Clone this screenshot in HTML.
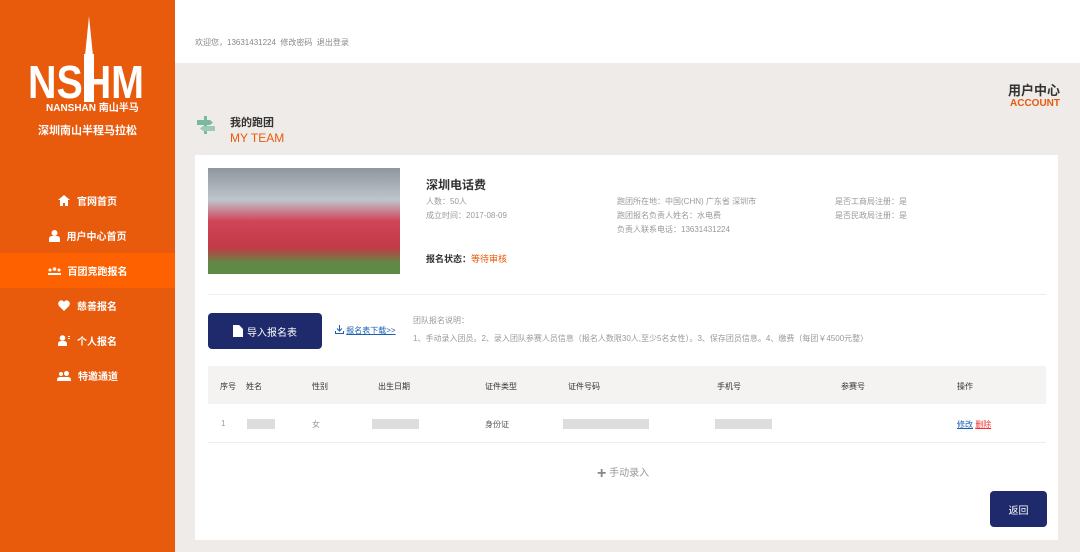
<!DOCTYPE html>
<html><head><meta charset="utf-8"><style>
*{margin:0;padding:0;box-sizing:border-box}
body{width:1080px;height:552px;overflow:hidden;font-family:"Liberation Sans","Noto Sans CJK SC",sans-serif;background:#efebe8;position:relative;color:#333}
.a{position:absolute;white-space:nowrap}
#side{position:absolute;left:0;top:0;width:175px;height:552px;background:#e85a0c}
.nav{position:absolute;left:0;width:175px;height:35px;color:#fff;font-size:10px;font-weight:bold;display:flex;align-items:center;justify-content:center;gap:7px}
.g{color:#999;font-size:8px}
.blur{position:absolute;height:10px;background:#ddd}
</style></head><body>
<div id="side">
  <svg class="a" style="left:28px;top:16px" width="120" height="96" viewBox="0 0 120 96">
    <polygon points="61,0 57,40 65,40" fill="#fff"/>
    <rect x="56" y="38" width="10" height="48" fill="#fff"/>
    <text x="0" y="82" font-size="46" font-weight="bold" fill="#fff" font-family="Liberation Sans,sans-serif" textLength="116" lengthAdjust="spacingAndGlyphs">NSHM</text>
    <text x="18" y="95" font-size="10" font-weight="bold" fill="#fff" font-family="Liberation Sans,Noto Sans CJK SC,sans-serif">NANSHAN 南山半马</text>
  </svg>
  <div class="a" style="left:0;width:175px;text-align:center;top:122px;color:#fff;font-size:11px;font-weight:bold">深圳南山半程马拉松</div>
  <div class="nav" style="top:183px"><svg width="12" height="11" viewBox="0 0 12 11"><path d="M6 0L0 5h2v6h3V8h2v3h3V5h2z" fill="#fff"/></svg>官网首页</div>
  <div class="nav" style="top:218px"><svg width="11" height="12" viewBox="0 0 11 12"><circle cx="5.5" cy="3" r="3" fill="#fff"/><path d="M0 12v-3q0-3 3-3h5q3 0 3 3v3z" fill="#fff"/></svg>用户中心首页</div>
  <div class="nav" style="top:253px;background:#fe6200"><svg width="13" height="8" viewBox="0 0 13 8"><circle cx="2" cy="3" r="1.5" fill="#fff"/><circle cx="6.5" cy="2" r="1.8" fill="#fff"/><circle cx="11" cy="3" r="1.5" fill="#fff"/><rect x="0" y="6" width="13" height="2" fill="#fff"/></svg>百团竞跑报名</div>
  <div class="nav" style="top:288px"><svg width="12" height="11" viewBox="0 0 12 11"><path d="M6 11L1 6Q-1 3 1.5 1Q4 -1 6 2Q8 -1 10.5 1Q13 3 11 6z" fill="#fff"/></svg>慈善报名</div>
  <div class="nav" style="top:323px"><svg width="12" height="11" viewBox="0 0 12 11"><circle cx="4.5" cy="3" r="2.8" fill="#fff"/><path d="M0 11v-2q0-3 3-3h3q3 0 3 3v2z" fill="#fff"/><rect x="10" y="1" width="2" height="1" fill="#fff"/><rect x="10" y="3" width="2" height="1" fill="#fff"/></svg>个人报名</div>
  <div class="nav" style="top:358px"><svg width="14" height="10" viewBox="0 0 14 10"><circle cx="4" cy="3" r="2" fill="#fff"/><circle cx="9.5" cy="2.5" r="2.5" fill="#fff"/><path d="M0 10v-1q0-3 3-3h8q3 0 3 3v1z" fill="#fff"/></svg>特邀通道</div>
</div>
<div class="a" style="left:175px;top:0;width:905px;height:63px;background:#fff"></div>
<div class="a" style="left:195px;top:37px;font-size:8px;color:#888">欢迎您，13631431224 &nbsp;修改密码 &nbsp;退出登录</div>
<div class="a" style="right:20px;top:80px;font-size:13px;font-weight:bold;color:#333">用户中心</div>
<div class="a" style="right:20px;top:98px;font-size:10px;font-weight:bold;color:#e85a0c">ACCOUNT</div>
<svg class="a" style="left:196px;top:115px" width="20" height="20" viewBox="0 0 20 20"><rect x="8" y="1" width="3" height="18" fill="#7bb8a0"/><path d="M1 5h13l3 2.5-3 2.5H1z" fill="#7bb8a0"/><path d="M19 11H7l-3 2.5 3 2.5h12z" fill="#9ccab7"/></svg>
<div class="a" style="left:230px;top:114px;font-size:11px;font-weight:bold">我的跑团</div>
<div class="a" style="left:230px;top:131px;font-size:12px;color:#e85a0c">MY TEAM</div>
<div class="a" style="left:195px;top:155px;width:863px;height:385px;background:#fff"></div>
<div class="a" style="left:208px;top:168px;width:192px;height:106px;background:linear-gradient(180deg,#8f969e 0%,#bfc5cc 30%,#d0455a 50%,#c23a45 75%,#5f8a45 90%)"></div>
<div class="a" style="left:426px;top:176px;font-size:12px;font-weight:bold">深圳电话费</div>
<div class="a g" style="left:426px;top:196px">人数：50人</div>
<div class="a g" style="left:426px;top:210px">成立时间：2017-08-09</div>
<div class="a g" style="left:617px;top:196px">跑团所在地：中国(CHN) 广东省 深圳市</div>
<div class="a g" style="left:617px;top:210px">跑团报名负责人姓名：水电费</div>
<div class="a g" style="left:617px;top:224px">负责人联系电话：13631431224</div>
<div class="a g" style="left:835px;top:196px">是否工商局注册：是</div>
<div class="a g" style="left:835px;top:210px">是否民政局注册：是</div>
<div class="a" style="left:426px;top:252px;font-size:9px;font-weight:bold">报名状态：<span style="color:#e85a0c;font-weight:normal">等待审核</span></div>
<div class="a" style="left:208px;top:294px;width:838px;height:1px;background:#eee"></div>
<div class="a" style="left:208px;top:313px;width:114px;height:36px;background:#1e2a6b;border-radius:4px;color:#fff;font-size:10px;display:flex;align-items:center;justify-content:center;gap:4px"><svg width="10" height="12" viewBox="0 0 10 12"><path d="M0 0h6l4 4v8H0z" fill="#fff"/></svg>导入报名表</div>
<div class="a" style="left:335px;top:325px;font-size:8px;color:#1a5fb4"><svg width="9" height="9" viewBox="0 0 9 9" style="vertical-align:-1px"><path d="M4.5 0v6M2 3.5l2.5 2.5 2.5-2.5M0.5 6v2.5h8V6" stroke="#1a5fb4" fill="none"/></svg> <u>报名表下载&gt;&gt;</u></div>
<div class="a g" style="left:413px;top:315px">团队报名说明：</div>
<div class="a g" style="left:413px;top:333px">1、手动录入团员。2、录入团队参赛人员信息（报名人数限30人,至少5名女性）。3、保存团员信息。4、缴费（每团￥4500元整）</div>
<div class="a" style="left:208px;top:366px;width:838px;height:38px;background:#f5f3f2"></div>
<div class="a" style="top:381px;font-size:8px;color:#333;left:0;width:1080px;height:10px">
<span class="a" style="left:220px">序号</span><span class="a" style="left:246px">姓名</span><span class="a" style="left:312px">性别</span><span class="a" style="left:378px">出生日期</span><span class="a" style="left:485px">证件类型</span><span class="a" style="left:568px">证件号码</span><span class="a" style="left:717px">手机号</span><span class="a" style="left:841px">参赛号</span><span class="a" style="left:957px">操作</span></div>
<div class="a g" style="left:221px;top:419px">1</div>
<div class="blur" style="left:247px;top:419px;width:28px"></div>
<div class="a g" style="left:312px;top:419px">女</div>
<div class="blur" style="left:372px;top:419px;width:47px"></div>
<div class="a g" style="left:485px;top:419px;color:#555">身份证</div>
<div class="blur" style="left:563px;top:419px;width:86px"></div>
<div class="blur" style="left:715px;top:419px;width:57px"></div>
<div class="a" style="left:957px;top:419px;font-size:8px"><u style="color:#1a5fb4">修改</u> <u style="color:#e33">删除</u></div>
<div class="a" style="left:208px;top:442px;width:838px;height:1px;background:#eee"></div>
<div class="a" style="left:597px;top:464px;font-size:10px;color:#999"><b style="font-size:16px;color:#888;vertical-align:-2px">+</b> 手动录入</div>
<div class="a" style="left:990px;top:491px;width:57px;height:36px;background:#1e2a6b;border-radius:4px;color:#fff;font-size:10px;display:flex;align-items:center;justify-content:center">返回</div>
</body></html>
